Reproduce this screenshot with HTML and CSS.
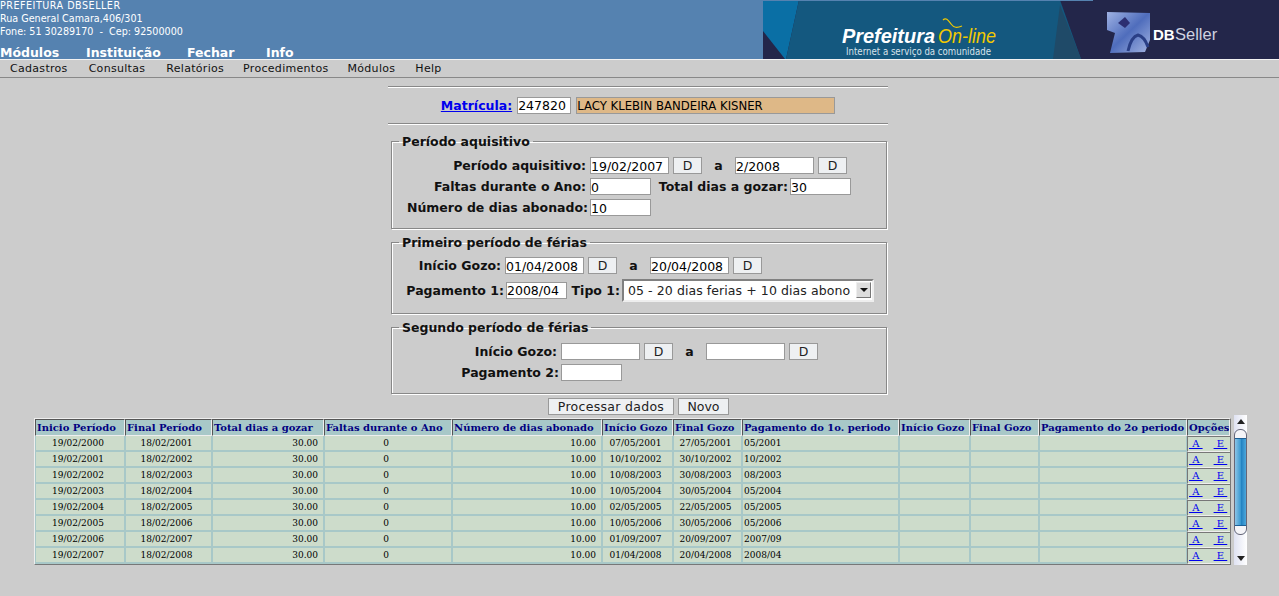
FILE: index.html
```html
<!DOCTYPE html>
<html lang="pt-BR">
  <head>
    <meta charset="UTF-8" />
    <title>Cadastro de férias</title>
    <link rel="stylesheet" href="styles.css">
  </head>

  <body>
    <div class="topo">
      <div class="topo-info">
        <div class="endereco">
          <span class="endereco-nome">PREFEITURA DBSELLER</span><br />
          Rua General Camara,406/301<br />
          Fone: 51 30289170 &nbsp;-&nbsp; Cep: 92500000
        </div>
        <div class="modulos">
          <a>Módulos</a><a>Instituição</a><a>Fechar</a><a>Info</a>
        </div>
      </div>
      <svg class="banner" width="516" height="59" viewBox="0 0 516 59">
        <defs>
          <linearGradient id="cubo" x1="0" y1="0" x2="1" y2="1">
            <stop offset="0" stop-color="#9fb2e4" />
            <stop offset="0.5" stop-color="#4f6dbc" />
            <stop offset="1" stop-color="#a3b4e2" />
          </linearGradient>
        </defs>
        <rect width="516" height="59" fill="#23264a" />
        <polygon points="0,0 36,0 23,59 22,59 0,31" fill="#0a6fa5" />
        <polygon points="36,0 297,0 318,59 23,59" fill="#14587f" />
        <polygon points="297,5 318,59 290,59" fill="#1f4a68" />
        <rect width="330" height="1" fill="#5582b0" />
        <text x="79" y="43" class="logo-pref" textLength="93" lengthAdjust="spacingAndGlyphs">Prefeitura</text>
        <text x="175" y="43" class="logo-online" textLength="58" lengthAdjust="spacingAndGlyphs">On-line</text>
        <path d="M180 20 C183 17 185 20 188 24 S194 28 199 26" fill="none" stroke="#f2c900" stroke-width="1.2" />
        <text x="83" y="55" class="logo-sub" textLength="145" lengthAdjust="spacingAndGlyphs">Internet a serviço da comunidade</text>
        <polygon points="344,12 387,13 387,40 382,52 347,53 352,33 344,30" fill="url(#cubo)" />
        <polygon points="355,23 362,17 367,23 362,28" fill="#2c2f72" />
        <path d="M365 51 C367 42 371 36 375 35 C379 36 383 41 385 47" fill="none" stroke="#2a3f86" stroke-width="3" />
        <text x="390" y="40" class="logo-db">DB</text>
        <text x="412" y="40" class="logo-seller">Seller</text>
      </svg>
    </div>

    <div class="menu">
      <a>Cadastros</a><a>Consultas</a><a>Relatórios</a><a>Procedimentos</a><a>Módulos</a><a>Help</a>
    </div>

    <form class="form-ferias">
      <div class="linha-matricula">
        <a href="#" class="link-matricula">Matrícula:</a>
        <input class="campo campo-matricula" value="247820" />
        <input class="campo campo-nome" value="LACY KLEBIN BANDEIRA KISNER" />
      </div>

      <fieldset class="grupo grupo-aquisitivo">
        <legend>Período aquisitivo</legend>
        <div class="linha">
          <label class="rotulo rotulo-a">Período aquisitivo:</label>
          <input class="campo data" value="19/02/2007" />
          <button type="button" class="btn btn-d">D</button>
          <span class="ate">a</span>
          <input class="campo data" value="2/2008" />
          <button type="button" class="btn btn-d">D</button>
        </div>
        <div class="linha">
          <label class="rotulo rotulo-a">Faltas durante o Ano:</label>
          <input class="campo curto" value="0" />
          <label class="rotulo rotulo-total">Total dias a gozar:</label>
          <input class="campo curto" value="30" />
        </div>
        <div class="linha">
          <label class="rotulo rotulo-a-longo">Número de dias abonado:</label>
          <input class="campo curto" value="10" />
        </div>
      </fieldset>

      <fieldset class="grupo grupo-primeiro">
        <legend>Primeiro período de férias</legend>
        <div class="linha">
          <label class="rotulo rotulo-b">Início Gozo:</label>
          <input class="campo data" value="01/04/2008" />
          <button type="button" class="btn btn-d">D</button>
          <span class="ate">a</span>
          <input class="campo data" value="20/04/2008" />
          <button type="button" class="btn btn-d">D</button>
        </div>
        <div class="linha linha-tipo">
          <label class="rotulo rotulo-b-longo">Pagamento 1:</label>
          <input class="campo curto" value="2008/04" />
          <label class="rotulo rotulo-tipo">Tipo 1:</label>
          <div class="select-tipo">
            <span>05 - 20 dias ferias + 10 dias abono</span>
            <i class="select-seta"></i>
          </div>
        </div>
      </fieldset>

      <fieldset class="grupo grupo-segundo">
        <legend>Segundo período de férias</legend>
        <div class="linha">
          <label class="rotulo rotulo-c">Início Gozo:</label>
          <input class="campo data" />
          <button type="button" class="btn btn-d">D</button>
          <span class="ate">a</span>
          <input class="campo data" />
          <button type="button" class="btn btn-d">D</button>
        </div>
        <div class="linha">
          <label class="rotulo rotulo-c-longo">Pagamento 2:</label>
          <input class="campo curto" />
        </div>
      </fieldset>

      <div class="acoes">
        <button type="button" class="btn btn-processar">Processar dados</button>
        <button type="button" class="btn btn-novo">Novo</button>
      </div>
    </form>

    <div class="area-lista">
      <table class="lista">
        <colgroup>
          <col class="c1" /><col class="c2" /><col class="c3" /><col class="c4" /><col class="c5" /><col class="c6" />
          <col class="c7" /><col class="c8" /><col class="c9" /><col class="c10" /><col class="c11" /><col class="c12" />
        </colgroup>
        <tr>
          <th>Inicio Período</th><th>Final Período</th><th>Total dias a gozar</th><th>Faltas durante o Ano</th><th>Número de dias abonado</th><th>Início Gozo</th>
          <th>Final Gozo</th><th>Pagamento do 1o. periodo</th><th>Início Gozo</th><th>Final Gozo</th><th>Pagamento do 2o periodo</th><th>Opções</th>
        </tr>
        <tr>
          <td class="ce">19/02/2000</td><td class="ce">18/02/2001</td><td class="di">30.00</td><td class="ce">0</td><td class="di">10.00</td><td class="ce">07/05/2001</td>
          <td class="ce">27/05/2001</td><td>05/2001</td><td></td><td></td><td></td><td class="opcoes"><a href="#">&nbsp;A&nbsp;</a><a href="#">&nbsp;E&nbsp;</a></td>
        </tr>
        <tr>
          <td class="ce">19/02/2001</td><td class="ce">18/02/2002</td><td class="di">30.00</td><td class="ce">0</td><td class="di">10.00</td><td class="ce">10/10/2002</td>
          <td class="ce">30/10/2002</td><td>10/2002</td><td></td><td></td><td></td><td class="opcoes"><a href="#">&nbsp;A&nbsp;</a><a href="#">&nbsp;E&nbsp;</a></td>
        </tr>
        <tr>
          <td class="ce">19/02/2002</td><td class="ce">18/02/2003</td><td class="di">30.00</td><td class="ce">0</td><td class="di">10.00</td><td class="ce">10/08/2003</td>
          <td class="ce">30/08/2003</td><td>08/2003</td><td></td><td></td><td></td><td class="opcoes"><a href="#">&nbsp;A&nbsp;</a><a href="#">&nbsp;E&nbsp;</a></td>
        </tr>
        <tr>
          <td class="ce">19/02/2003</td><td class="ce">18/02/2004</td><td class="di">30.00</td><td class="ce">0</td><td class="di">10.00</td><td class="ce">10/05/2004</td>
          <td class="ce">30/05/2004</td><td>05/2004</td><td></td><td></td><td></td><td class="opcoes"><a href="#">&nbsp;A&nbsp;</a><a href="#">&nbsp;E&nbsp;</a></td>
        </tr>
        <tr>
          <td class="ce">19/02/2004</td><td class="ce">18/02/2005</td><td class="di">30.00</td><td class="ce">0</td><td class="di">10.00</td><td class="ce">02/05/2005</td>
          <td class="ce">22/05/2005</td><td>05/2005</td><td></td><td></td><td></td><td class="opcoes"><a href="#">&nbsp;A&nbsp;</a><a href="#">&nbsp;E&nbsp;</a></td>
        </tr>
        <tr>
          <td class="ce">19/02/2005</td><td class="ce">18/02/2006</td><td class="di">30.00</td><td class="ce">0</td><td class="di">10.00</td><td class="ce">10/05/2006</td>
          <td class="ce">30/05/2006</td><td>05/2006</td><td></td><td></td><td></td><td class="opcoes"><a href="#">&nbsp;A&nbsp;</a><a href="#">&nbsp;E&nbsp;</a></td>
        </tr>
        <tr>
          <td class="ce">19/02/2006</td><td class="ce">18/02/2007</td><td class="di">30.00</td><td class="ce">0</td><td class="di">10.00</td><td class="ce">01/09/2007</td>
          <td class="ce">20/09/2007</td><td>2007/09</td><td></td><td></td><td></td><td class="opcoes"><a href="#">&nbsp;A&nbsp;</a><a href="#">&nbsp;E&nbsp;</a></td>
        </tr>
        <tr>
          <td class="ce">19/02/2007</td><td class="ce">18/02/2008</td><td class="di">30.00</td><td class="ce">0</td><td class="di">10.00</td><td class="ce">01/04/2008</td>
          <td class="ce">20/04/2008</td><td>2008/04</td><td></td><td></td><td></td><td class="opcoes"><a href="#">&nbsp;A&nbsp;</a><a href="#">&nbsp;E&nbsp;</a></td>
        </tr>
      </table>

      <div class="rolagem">
        <div class="rolagem-seta"><i class="seta-cima"></i></div>
        <div class="rolagem-trilho"><div class="rolagem-cursor"></div></div>
        <div class="rolagem-seta"><i class="seta-baixo"></i></div>
      </div>
    </div>
  </body>
</html>
```

FILE: styles.css
```css
body {
  font-family: "DejaVu Sans", sans-serif;
  margin: 0;
  padding: 0;
  background-color: #cccccc;
  height: 596px;
  overflow: hidden;
}

/* topo */
.topo {
  display: flex;
  justify-content: space-between;
  height: 59px;
  background-color: #5582b0;
  color: #fff;
}

.endereco {
  font-size: 9.6px;
  line-height: 13px;
  height: 46px;
  margin-top: -1px;
}

.endereco-nome {
  letter-spacing: 0.5px;
}

.modulos {
  display: flex;
  font-size: 12.5px;
  font-weight: bold;
  line-height: 16px;
}

.modulos a:nth-child(1) { width: 86px; }
.modulos a:nth-child(2) { width: 101px; }
.modulos a:nth-child(3) { width: 79px; }

.banner {
  display: block;
  flex: none;
}

.logo-pref {
  font: italic bold 20px "Liberation Sans", sans-serif;
  fill: #fff;
}

.logo-online {
  font: italic 20px "Liberation Sans", sans-serif;
  fill: #f2c900;
}

.logo-sub {
  font: 10px "DejaVu Sans", sans-serif;
  fill: #d8e2ea;
}

.logo-db {
  font: bold 15px "Liberation Sans", sans-serif;
  fill: #fff;
}

.logo-seller {
  font: 16.5px "Liberation Sans", sans-serif;
  fill: #cfd3e0;
}

/* menu */
.menu {
  display: flex;
  height: 19px;
  padding-left: 10px;
  background-color: #cccccc;
  border-top: 1px solid #f2f2f2;
  border-bottom: 1px solid #888;
  font-size: 11px;
  line-height: 17px;
  letter-spacing: 0.3px;
  color: #111;
  box-sizing: border-box;
}

.menu a {
  margin-right: 20px;
}

.menu a:nth-child(1) { margin-right: 21px; }
.menu a:nth-child(2) { margin-right: 21px; }
.menu a:nth-child(3) { margin-right: 19px; }
.menu a:nth-child(4) { margin-right: 19px; }

/* formulario */
.form-ferias {
  width: 500px;
  margin: 8px 0 0 388px;
}

.linha-matricula {
  display: flex;
  align-items: center;
  justify-content: center;
  height: 36px;
  border-top: 1px solid #888;
  border-bottom: 1px solid #888;
  box-shadow: 0 1px 0 #fff, inset 0 1px 0 #fff;
  gap: 5px;
}

.link-matricula {
  font-size: 12.5px;
  font-weight: bold;
  color: #0000ee;
}

.campo {
  font-family: "DejaVu Sans", sans-serif;
  font-size: 12.5px;
  height: 17px;
  padding: 1px 0 0;
  margin: 0;
  border: 1px solid #999;
  background-color: #fff;
  color: #000;
  box-sizing: border-box;
}

.campo-matricula { width: 54px; }

.campo-nome {
  width: 259px;
  background-color: #deb887;
  font-size: 11.7px;
}

.data { width: 79px; }
.curto { width: 61px; }

.grupo {
  margin: 6px 1px 0 3px;
  padding: 5px 0 0;
  border: 1px solid #888;
  box-shadow: 1px 1px 0 #fff, inset 1px 1px 0 #fff;
  box-sizing: border-box;
}

.grupo legend {
  margin-left: 7px;
  padding: 0 3px;
  font-size: 12.5px;
  font-weight: bold;
  line-height: 15px;
  color: #111;
}

.grupo-aquisitivo {
  height: 95px;
  margin-top: 10px;
  padding-top: 6px;
}

.grupo-primeiro { height: 79px; }

.grupo-segundo {
  height: 74px;
  padding-top: 6px;
}

.linha {
  display: flex;
  align-items: center;
  height: 21px;
}

.rotulo,
.rotulo-a-longo,
.rotulo-b-longo,
.rotulo-c-longo {
  font-size: 12.5px;
  font-weight: bold;
  text-align: right;
  color: #111;
  white-space: nowrap;
}

.rotulo-a { width: 194px; margin-right: 4px; }
.rotulo-a-longo { width: 196px; margin-right: 2px; }
.rotulo-b { width: 109px; margin-right: 4px; }
.rotulo-b-longo { width: 112px; margin-right: 2px; }
.rotulo-c { width: 165px; margin-right: 4px; }
.rotulo-c-longo { width: 167px; margin-right: 2px; }
.rotulo-total { width: 137px; margin-right: 2px; }
.rotulo-tipo { width: 53px; margin-right: 2px; }

.btn {
  font-family: "DejaVu Sans", sans-serif;
  font-size: 12.5px;
  height: 17px;
  padding: 0;
  border: 1px solid #999;
  background-color: #eef0f2;
  color: #222;
  margin: 0;
}

.btn-d {
  width: 29px;
  margin-left: 4px;
}

.ate {
  width: 33px;
  font-size: 12.5px;
  text-align: center;
  font-weight: bold;
  color: #111;
}

.linha-tipo {
  height: 24px;
  margin-top: 2px;
}

.select-tipo {
  display: flex;
  align-items: center;
  justify-content: space-between;
  width: 252px;
  height: 23px;
  padding: 0 1px 0 4px;
  font-size: 12.5px;
  letter-spacing: 0.08px;
  white-space: nowrap;
  background-color: #fff;
  border: 2px solid;
  border-color: #808080 #eee #eee #808080;
  box-sizing: border-box;
  color: #222;
}

.select-seta {
  display: flex;
  align-items: center;
  justify-content: center;
  flex: none;
  width: 15px;
  height: 16px;
  background-color: #ddd;
  border: 1px solid;
  border-color: #eee #777 #777 #eee;
  box-sizing: border-box;
}

.select-seta::before {
  content: "";
  border-left: 4px solid transparent;
  border-right: 4px solid transparent;
  border-top: 4px solid #111;
}

.acoes {
  display: flex;
  gap: 4px;
  margin-top: 4px;
  padding-left: 160px;
}

.btn-processar {
  width: 126px;
  letter-spacing: 0.3px;
}

.btn-novo { width: 51px; }

/* lista */
.area-lista {
  display: flex;
  align-items: flex-start;
  gap: 3px;
  margin-left: 34px;
}

.lista {
  table-layout: fixed;
  width: 1197px;
  margin-top: 3px;
  border-collapse: separate;
  border-spacing: 0;
  border: 1px solid;
  border-color: #eee #777 #777 #eee;
  background-color: #a8c8c8;
  font-family: "DejaVu Serif", serif;
  box-sizing: border-box;
}

.c1 { width: 90px; }
.c2 { width: 87px; }
.c3 { width: 112px; }
.c4 { width: 128px; }
.c5 { width: 150px; }
.c6 { width: 71px; }
.c7 { width: 69px; }
.c8 { width: 157px; }
.c9 { width: 71px; }
.c10 { width: 69px; }
.c11 { width: 148px; }
.c12 { width: 43px; }

th {
  height: 17px;
  padding: 0 0 1px 1px;
  font-size: 10px;
  font-weight: bold;
  text-align: left;
  white-space: nowrap;
  overflow: hidden;
  color: #000080;
  background-color: #a8c8c8;
  border: 1px solid;
  border-color: #555 #eee #eee #555;
  box-sizing: border-box;
}

td {
  height: 16px;
  padding: 0 1px;
  font-size: 9px;
  white-space: nowrap;
  color: #000;
  background-color: #cddccb;
  border-left: 1px solid #a8c8c8;
  border-right: 1px solid #a8c8c8;
  border-bottom: 2px solid #a8c8c8;
  box-sizing: border-box;
}

.ce {
  text-align: center;
  padding-right: 5px;
}

.di {
  text-align: right;
  padding-right: 5px;
}

td.opcoes {
  padding: 0 0 0 1px;
  font-size: 10px;
  line-height: 14px;
  border: 0;
  border-top: 1px solid #777;
  border-left: 1px solid #777;
  border-bottom: 1px solid #eee;
}

.opcoes a { color: #0000ee; }
.opcoes a:first-child { margin-right: 11px; }

/* barra de rolagem */
.rolagem {
  display: flex;
  flex-direction: column;
  width: 13px;
  height: 150px;
  background: linear-gradient(to right, #dfe2f2, #fff);
}

.rolagem-seta {
  display: flex;
  align-items: center;
  justify-content: center;
  height: 13px;
  flex: none;
}

.seta-cima {
  border-left: 4px solid transparent;
  border-right: 4px solid transparent;
  border-bottom: 5px solid #222;
}

.seta-baixo {
  border-left: 4px solid transparent;
  border-right: 4px solid transparent;
  border-top: 5px solid #222;
}

.rolagem-trilho {
  flex: 1;
  padding-top: 1px;
}

.rolagem-cursor {
  height: 106px;
  border: 1px solid #667;
  border-radius: 6px;
  box-sizing: border-box;
  background: linear-gradient(to bottom, #f4f4f8 0, #f4f4f8 8px, #1b5f96 8px, #1b5f96 9px, transparent 9px, transparent 95px, #1b5f96 95px, #1b5f96 96px, #f4f4f8 96px),
    linear-gradient(to right, #8cc4e6, #3b9ad2 50%, #1f7fc0 55%, #4da8dc);
}
```
